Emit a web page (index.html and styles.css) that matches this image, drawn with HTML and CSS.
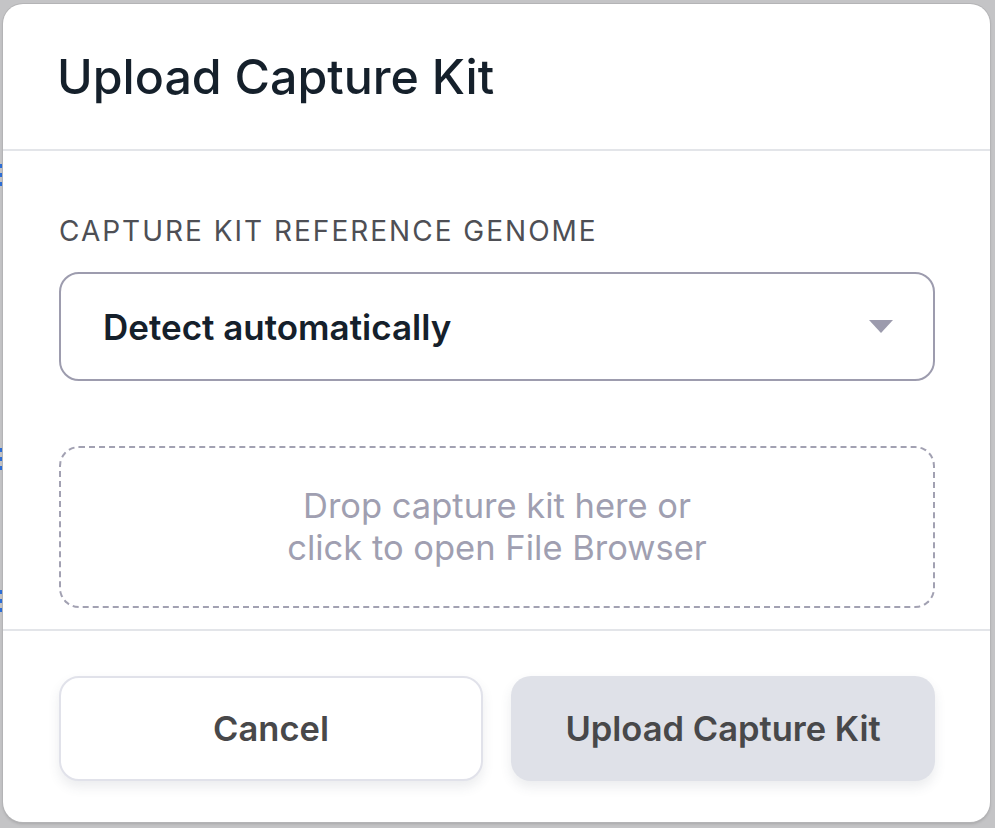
FILE: index.html
```html
<!DOCTYPE html>
<html>
<head>
<meta charset="utf-8">
<link rel="stylesheet" href="styles.css">
</head>
<body>
<div class="backdrop">
  <div class="bg-marks">
    <span class="mark m1"></span>
    <span class="mark m2"></span>
    <span class="mark m3"></span>
  </div>
  <div class="modal">
    <div class="modal-header">
      <h1 class="title">Upload Capture Kit</h1>
    </div>
    <div class="modal-body">
      <div class="field-label">Capture kit reference genome</div>
      <div class="select">
        <span class="select-value">Detect automatically</span>
        <svg class="caret" width="24" height="14" viewBox="0 0 24 14"><path d="M0 0 H24 L12 13 Z" fill="#9c9bad"/></svg>
      </div>
      <div class="dropzone">
        <p class="drop-text">Drop capture kit here or<br>click to open File Browser</p>
      </div>
    </div>
    <div class="modal-footer">
      <button class="btn btn-cancel">Cancel</button>
      <button class="btn btn-upload">Upload Capture Kit</button>
    </div>
  </div>
</div>
</body>
</html>
```

FILE: styles.css
```css
html, body {
  margin: 0;
  padding: 0;
}
body {
  width: 995px;
  height: 828px;
  overflow: hidden;
  background: #c4c4c6;
  font-family: Inter, "Noto Sans", sans-serif;
}
.backdrop {
  position: relative;
  width: 995px;
  height: 828px;
  padding: 4px 5px 6px 3px;
  box-sizing: border-box;
}
.bg-marks .mark {
  position: absolute;
  left: 0;
  width: 2px;
  height: 22px;
  background: repeating-linear-gradient(#2d6fd8 0 4px, transparent 4px 9px);
}
.m1 { top: 164px; }
.m2 { top: 448px; height: 22px; }
.m3 { top: 590px; }
.modal {
  position: relative;
  height: 100%;
  background: #ffffff;
  border-radius: 20px;
  box-shadow: 0 0 0 1px #b4b4b6, 0 2px 3px rgba(0,0,0,0.15);
  display: flex;
  flex-direction: column;
  overflow: hidden;
}
.modal-header {
  height: 145px;
  border-bottom: 2px solid #e3e5e9;
  display: flex;
  align-items: center;
  padding: 0 54px;
  flex-shrink: 0;
}
.title {
  margin: 0;
  font-size: 48.3px;
  line-height: 56px;
  font-weight: 500;
  color: #15202b;
}
.modal-body {
  padding: 63px 55px 21px 56px;
  border-bottom: 2px solid #e3e5e9;
  flex-shrink: 0;
}
.field-label {
  font-size: 28px;
  line-height: 34px;
  text-transform: uppercase;
  letter-spacing: 2px;
  color: #4e4f55;
  margin-bottom: 24px;
}
.select {
  height: 109px;
  box-sizing: border-box;
  border: 2px solid #9d9cae;
  border-radius: 20px;
  display: flex;
  align-items: center;
  justify-content: space-between;
  padding: 0 40px 0 42px;
}
.select-value {
  font-size: 35px;
  font-weight: 600;
  color: #15202b;
}
.caret {
  display: block;
}
.dropzone {
  margin-top: 65px;
  height: 162px;
  box-sizing: border-box;
  border: 2px dashed #a2a1b2;
  border-radius: 20px;
  display: flex;
  align-items: center;
  justify-content: center;
}
.drop-text {
  margin: 0;
  text-align: center;
  font-size: 34.5px;
  line-height: 42px;
  color: #a09fb1;
}
.modal-footer {
  flex: 1;
  display: grid;
  grid-template-columns: 1fr 1fr;
  gap: 28px;
  padding: 45px 55px 0 56px;
  align-items: start;
}
.btn {
  height: 105px;
  border-radius: 20px;
  font-family: Inter, "Noto Sans", sans-serif;
  font-size: 34.5px;
  font-weight: 600;
  color: #48484a;
  cursor: pointer;
  box-shadow: 0 6px 12px rgba(60, 64, 90, 0.10);
}
.btn-cancel {
  background: #ffffff;
  border: 2px solid #e1e2ea;
}
.btn-upload {
  background: #dfe1e8;
  border: none;
}
```
